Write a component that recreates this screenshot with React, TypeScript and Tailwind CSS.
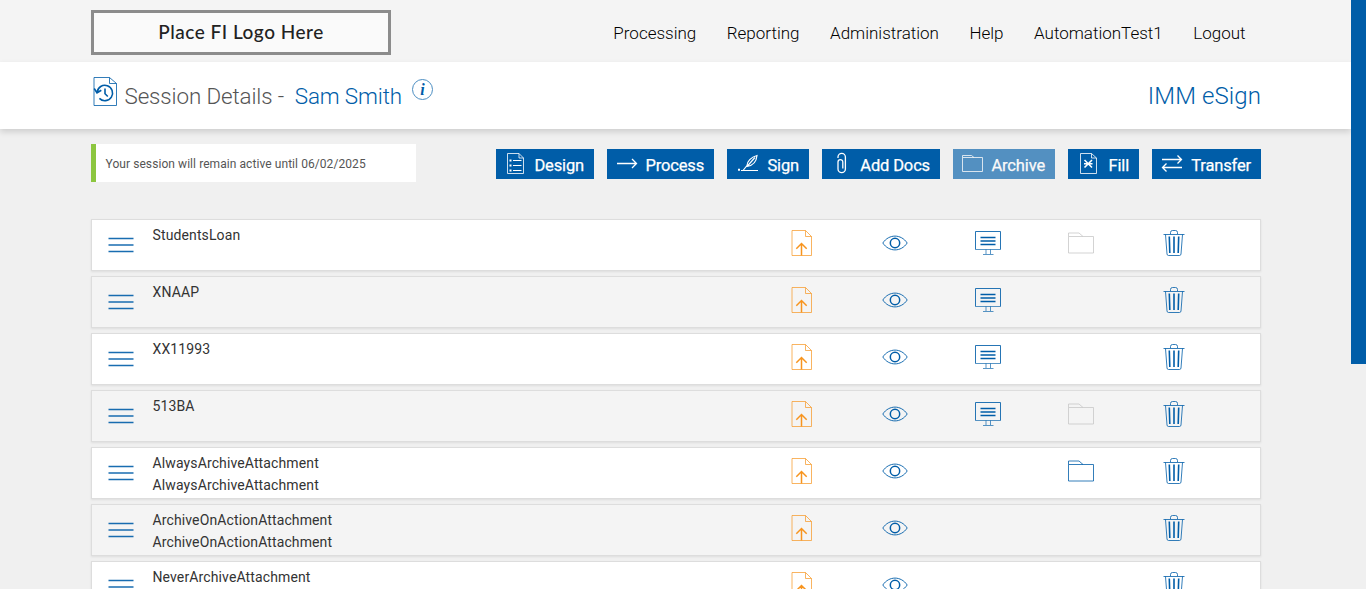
import React from 'react';

type IconProps = {
  className?: string;
};

type ActionProps = {
  label: string;
  icon: React.FC<IconProps>;
  width: string;
  disabled?: boolean;
};

type DocumentRow = {
  name: string;
  attachment?: string;
  present?: boolean;
  archive?: 'enabled' | 'disabled';
};

const SessionIcon: React.FC<IconProps> = ({ className }) => (
  <svg className={className} width="26" height="32" viewBox="0 0 26 32" fill="none" stroke="currentColor">
    <path d="M2 2.5H17.5L24.5 8.5V30.5H2ZM17.5 2.5V8.5H24.5" strokeWidth="1" strokeOpacity="0.8" />
    <path d="M5.2 17.2A7.7 7.7 0 1 1 7.4 23.4" strokeWidth="1.6" />
    <path d="M2.2 13.5L5 17.8L9.3 15.2M13 13.5V18.7L15.8 21.5" strokeWidth="1.6" />
  </svg>
);

const DesignIcon: React.FC<IconProps> = ({ className }) => (
  <svg className={className} width="24" height="24" viewBox="0 0 24 24" fill="none" stroke="currentColor">
    <path d="M3.5 2.5H15L19.5 7V22.5H3.5ZM15 2.5V7H19.5" strokeOpacity="0.8" />
    <path d="M9 9.5H17.5M9 14.5H17.5M9 19.5H17.5" />
    <path d="M5.5 9.5H7.5M5.5 14.5H7.5M5.5 19.5H7.5" strokeWidth="2" />
  </svg>
);

const ProcessIcon: React.FC<IconProps> = ({ className }) => (
  <svg className={className} width="24" height="24" viewBox="0 0 24 24" fill="none" stroke="currentColor" strokeWidth="1.3">
    <path d="M2 12.5H21.5M17 8L21.5 12.5L17 17" />
  </svg>
);

const SignIcon: React.FC<IconProps> = ({ className }) => (
  <svg className={className} width="24" height="24" viewBox="0 0 24 24" fill="none" stroke="currentColor" strokeWidth="1.2">
    <path d="M6 19.5H23M8 19.5L12 14.5C12 10.5 16 6 22 4.5C21.5 10 18 14.5 12 15.5L20 6.5" />
    <path d="M3 18.8H5" strokeWidth="2" />
  </svg>
);

const ClipIcon: React.FC<IconProps> = ({ className }) => (
  <svg className={className} width="24" height="24" viewBox="0 0 24 24" fill="none" stroke="currentColor" strokeWidth="1.3">
    <path d="M8 7V6A3.7 3.7 0 0 1 15.4 6V18A3.7 3.7 0 0 1 8 18V11A2.4 2.4 0 0 1 12.8 11V17.5" />
  </svg>
);

const SmallFolderIcon: React.FC<IconProps> = ({ className }) => (
  <svg className={className} width="24" height="24" viewBox="0 0 24 24" fill="none" stroke="currentColor">
    <path d="M1.5 6.5V4.5H10.5L13 6.5H21.5V20.5H1.5ZM1.5 6.5H13" strokeOpacity="0.8" />
  </svg>
);

const FillIcon: React.FC<IconProps> = ({ className }) => (
  <svg className={className} width="24" height="24" viewBox="0 0 24 24" fill="none" stroke="currentColor">
    <path d="M4.5 2.5H15.5L20.5 7V22.5H4.5ZM15.5 2.5V7H20.5" strokeOpacity="0.8" />
    <path d="M8.5 9L16 16.5M16 9L8.5 16.5M8 12.8H16.5" strokeWidth="1.6" />
  </svg>
);

const TransferIcon: React.FC<IconProps> = ({ className }) => (
  <svg className={className} width="24" height="24" viewBox="0 0 24 24" fill="none" stroke="currentColor" strokeWidth="1.3">
    <path d="M2 8.5H21.5M17.5 4.5L21.5 8.5L17.5 12.5M22 16.5H2.5M6.5 12.5L2.5 16.5L6.5 20.5" />
  </svg>
);

const MenuIcon: React.FC<IconProps> = ({ className }) => (
  <svg className={className} width="26" height="16" viewBox="0 0 26 16" fill="none" stroke="currentColor" strokeWidth="1.5">
    <path d="M.5 1.6H25.5M.5 8.1H25.5M.5 14.6H25.5" strokeOpacity="0.9" />
  </svg>
);

const UploadIcon: React.FC<IconProps> = ({ className }) => (
  <svg className={className} width="22" height="28" viewBox="0 0 22 28" fill="none" stroke="currentColor">
    <path d="M1 1.5H14.5L20.5 7.5V26.5H1ZM14.5 1.5V7.5H20.5" strokeOpacity="0.7" />
    <path d="M10.5 26.5V14.5M5.3 19.7L10.5 14.5L15.7 19.7" strokeWidth="1.5" />
  </svg>
);

const EyeIcon: React.FC<IconProps> = ({ className }) => (
  <svg className={className} width="26" height="16" viewBox="0 0 26 16" fill="none" stroke="currentColor">
    <path d="M.8 8C7-1.2 19-1.2 25.2 8C19 17.2 7 17.2.8 8Z" strokeWidth="0.9" />
    <circle cx="13" cy="8" r="4.7" strokeWidth="1.5" />
  </svg>
);

const PresentIcon: React.FC<IconProps> = ({ className }) => (
  <svg className={className} width="28" height="26" viewBox="0 0 28 26" fill="none" stroke="currentColor">
    <path d="M1.5 19.5V1.5H26.5V19.5" strokeOpacity="0.85" />
    <path d="M1.5 19.5H26.5M12 19.5V24M16.5 19.5V24M9 24.5H19.5" strokeOpacity="0.65" />
    <path d="M6.5 7.5H21.5M6.5 11H21.5M6.5 14.5H21.5" strokeWidth="1.5" />
  </svg>
);

const FolderIcon: React.FC<IconProps> = ({ className }) => (
  <svg className={className} width="28" height="24" viewBox="0 0 28 24" fill="none" stroke="currentColor">
    <path d="M1.5 5.5V2H12L16 5.5H26.5V22H1.5ZM1.5 5.5H16" strokeWidth="0.8" />
  </svg>
);

const TrashIcon: React.FC<IconProps> = ({ className }) => (
  <svg className={className} width="22" height="28" viewBox="0 0 22 28" fill="none" stroke="currentColor">
    <path d="M.5 5.5H21.5M7.5 5V3.5Q7.5 1.5 9.5 1.5H12.5Q14.5 1.5 14.5 3.5V5M2.5 5.5L4 25Q4.2 26.5 5.5 26.5H16.5Q17.8 26.5 18 25L19.5 5.5" strokeWidth="0.8" />
    <path d="M6.3 7.5L6.8 24M11 7.5V24M15.7 7.5L15.2 24" strokeWidth="1.6" />
  </svg>
);

const navItems = ['Processing', 'Reporting', 'Administration', 'Help', 'AutomationTest1', 'Logout'];

const actions: ActionProps[] = [
  { label: 'Design', icon: DesignIcon, width: 'w-[98px]' },
  { label: 'Process', icon: ProcessIcon, width: 'w-[107px]' },
  { label: 'Sign', icon: SignIcon, width: 'w-[82px]' },
  { label: 'Add Docs', icon: ClipIcon, width: 'w-[118px]' },
  { label: 'Archive', icon: SmallFolderIcon, width: 'w-[102px]', disabled: true },
  { label: 'Fill', icon: FillIcon, width: 'w-[71px]' },
  { label: 'Transfer', icon: TransferIcon, width: 'w-[109px]' },
];

const documents: DocumentRow[] = [
  { name: 'StudentsLoan', present: true, archive: 'disabled' },
  { name: 'XNAAP', present: true },
  { name: 'XX11993', present: true },
  { name: '513BA', present: true, archive: 'disabled' },
  { name: 'AlwaysArchiveAttachment', attachment: 'AlwaysArchiveAttachment', archive: 'enabled' },
  { name: 'ArchiveOnActionAttachment', attachment: 'ArchiveOnActionAttachment' },
  { name: 'NeverArchiveAttachment' },
];

const ActionButton: React.FC<ActionProps> = ({ label, icon: Icon, width, disabled }) => (
  <button
    disabled={disabled}
    className={`flex h-[30px] shrink-0 items-start justify-between bg-[#005da8] pl-2 pr-[10px] pt-[2px] text-white ${width} ${disabled ? 'opacity-65' : ''}`}
  >
    <Icon className="shrink-0" />
    <span className="whitespace-nowrap pt-[3px] text-[16.5px] leading-[24px] tracking-[-0.15px] [-webkit-text-stroke:0.25px_white]">{label}</span>
  </button>
);

const DocumentItem: React.FC<DocumentRow> = ({ name, attachment, present, archive }) => (
  <li className="flex h-[52px] shrink-0 border border-[#ddd] bg-white shadow-[0_1px_2px_rgba(0,0,0,0.08)] even:bg-[#f4f4f4]">
    <MenuIcon className="ml-4 mt-[17px] shrink-0 text-[#005da8]" />
    <div className="ml-[18.5px] flex-1 pt-1 text-sm leading-[22px] tracking-[0.12px] text-[#333]">
      <p>{name}</p>
      {attachment && <p>{attachment}</p>}
    </div>
    <div className="mr-[39px] grid h-[46px] w-[466px] grid-cols-5 place-items-center text-[#005da8]">
      <UploadIcon className="text-[#f7941e]" />
      <EyeIcon />
      <span>{present && <PresentIcon />}</span>
      <span>{archive && <FolderIcon className={archive === 'disabled' ? 'text-[#c8c8c8]' : ''} />}</span>
      <TrashIcon />
    </div>
  </li>
);

const App: React.FC = () => {
  return (
    <div className="flex h-[589px] w-[1366px] overflow-hidden bg-[#f0f0f0] font-['Roboto',sans-serif]">
      <div className="w-[1351px] shrink-0">
        <header className="flex h-[62px] bg-[#f4f4f4] pl-[91px] pr-[105.5px]">
          <div className="mt-[10px] flex h-[45px] w-[300px] items-center justify-center border-3 border-[#8c8c8c] bg-[#fafafa] font-['Lato',sans-serif] text-[19px] font-medium tracking-[0.5px] text-[#222]">
            Place FI Logo Here
          </div>
          <nav className="ml-auto flex gap-[30.5px] pt-[21px] text-[17px] leading-6 font-light text-black">
            {navItems.map((item) => (
              <a key={item}>{item}</a>
            ))}
          </nav>
        </header>

        <section className="flex h-[67px] bg-white pl-[92px] pr-[90px] text-[#005da8] shadow-[0_3px_6px_rgba(0,0,0,0.14)]">
          <SessionIcon className="mt-[13px]" />
          <h1 className="ml-[6.5px] pt-[18px] text-[22.4px] leading-8 font-light tracking-[-0.12px] whitespace-pre text-[#555]">
            Session Details -  <span className="text-[#005da8]">Sam Smith</span>
          </h1>
          <span className="ml-[10px] mt-[17px] flex h-[21px] w-[21px] items-center justify-center rounded-full border border-[#4c8ec2] font-['Liberation_Serif',serif] text-[16px] leading-none font-bold italic">
            i
          </span>
          <span className="ml-auto pt-[18px] text-[24px] leading-8 font-light tracking-[0.1px]">IMM eSign</span>
        </section>

        <main className="ml-[91px] w-[1170px]">
          <div className="flex h-[90px] justify-between pt-[15px]">
            <p className="h-[38px] w-[325px] border-l-5 border-[#8cc63f] bg-white pl-[9.5px] text-xs leading-[40px] tracking-[0.07px] text-[#555]">
              Your session will remain active until 06/02/2025
            </p>
            <div className="flex gap-[13px] pt-[5px]">
              {actions.map((action) => (
                <ActionButton key={action.label} {...action} />
              ))}
            </div>
          </div>
          <ul className="flex flex-col gap-[5px]">
            {documents.map((document) => (
              <DocumentItem key={document.name} {...document} />
            ))}
          </ul>
        </main>
      </div>
      <div className="h-[364px] w-[15px] shrink-0 bg-[#005da8]" />
    </div>
  );
};

export default App;
